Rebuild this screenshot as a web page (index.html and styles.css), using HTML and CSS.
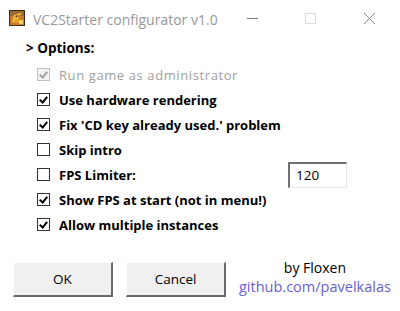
FILE: index.html
```html
<!DOCTYPE html>
<html>
<head>
<meta charset="utf-8">
<link rel="stylesheet" href="styles.css">
</head>
<body>
<div class="window">
  <div class="titlebar">
    <svg class="appicon" width="16" height="16" viewBox="0 0 16 16">
      <rect x="0.5" y="0.5" width="15" height="15" fill="#c87a2a" stroke="#3a2a1a"/>
      <rect x="1" y="1" width="14" height="5" fill="#9a6a3a"/>
      <path d="M3 12 L5 5 L8 4 L12 3 L13 4 L9 6 L10 9 L8 13 Z" fill="#f2c038"/>
      <path d="M4 13 L6 9 L9 9 L11 13 Z" fill="#e8a020"/>
      <path d="M6 6 L9 5 L8 8 Z" fill="#7a3a18"/>
      <rect x="10" y="10" width="4" height="4" fill="#f0d060"/>
    </svg>
    <span class="title">VC2Starter configurator v1.0</span>
    <div class="controls">
      <div class="ctl"><span class="min-line"></span></div>
      <div class="ctl"><span class="max-box"></span></div>
      <svg class="ctl" width="58" height="31" viewBox="0 0 58 31"><path d="M22 13 L33 24 M33 13 L22 24" stroke="#888" stroke-width="1"/></svg>
    </div>
  </div>
  <div class="content">
    <div class="heading">&gt; Options:</div>
    <ul class="options">
      <li class="opt disabled"><span class="box checked"></span><span class="label">Run game as administrator</span></li>
      <li class="opt"><span class="box checked"></span><span class="label">Use hardware rendering</span></li>
      <li class="opt"><span class="box checked"></span><span class="label">Fix 'CD key already used.' problem</span></li>
      <li class="opt"><span class="box"></span><span class="label">Skip intro</span></li>
      <li class="opt fps"><span class="box"></span><span class="label">FPS Limiter:</span><span class="input">120</span></li>
      <li class="opt"><span class="box checked"></span><span class="label">Show FPS at start (not in menu!)</span></li>
      <li class="opt"><span class="box checked"></span><span class="label">Allow multiple instances</span></li>
    </ul>
    <div class="footer">
      <button class="btn">OK</button>
      <button class="btn">Cancel</button>
      <div class="credits">
        <div class="by">by Floxen</div>
        <div class="link">github.com/pavelkalas</div>
      </div>
    </div>
  </div>
</div>
</body>
</html>
```

FILE: styles.css
```css
html, body {
  margin: 0;
  padding: 0;
  background: #fff;
}
.window {
  width: 400px;
  height: 311px;
  font-family: "Open Sans", "Noto Sans", sans-serif;
  color: #000;
  display: flex;
  flex-direction: column;
}
.titlebar {
  height: 31px;
  display: flex;
  align-items: center;
  padding-left: 9px;
}
.appicon {
  flex: none;
  margin-top: 5px;
}
.title {
  margin-left: 8px;
  font-size: 14px;
  color: #999;
  margin-top: 8px;
  flex: 1 1 auto;
  min-width: 0;
  white-space: nowrap;
  overflow: hidden;
}
.controls {
  flex: none;
  display: flex;
  align-self: flex-start;
}
.ctl {
  display: block;
  flex: none;
  width: 58px;
  height: 31px;
}
.min-line {
  display: block;
  margin: 18px 0 0 21px;
  width: 11px;
  height: 0;
  border-top: 1px solid #777;
}
.max-box {
  display: block;
  margin: 13px 0 0 21px;
  width: 9px;
  height: 9px;
  border: 1px solid #dcdcdc;
}
.content {
  padding-left: 26px;
  display: flex;
  flex-direction: column;
}
.heading {
  font-weight: 700;
  font-size: 13.5px;
  height: 20px;
  line-height: 20px;
  margin-top: 7px;
}
.options {
  list-style: none;
  margin: 4px 0 0 0;
  padding: 0 0 0 11px;
}
.opt {
  height: 25px;
  display: flex;
  align-items: center;
  font-weight: 700;
  font-size: 13px;
}
.opt.disabled {
  font-weight: 400;
  color: #a0a0a0;
  letter-spacing: 0.6px;
}
.box {
  width: 11px;
  height: 11px;
  border: 1px solid #333;
  background: #fff;
  position: relative;
  flex: none;
}
.opt.disabled .box {
  border-color: #c0c0c0;
  background: #f4f4f4;
}
.box.checked::after {
  content: "";
  position: absolute;
  left: 3px;
  top: 1px;
  width: 3px;
  height: 6px;
  border-right: 2px solid #000;
  border-bottom: 2px solid #000;
  transform: rotate(40deg);
}
.opt.disabled .box.checked::after {
  border-color: #a0a0a0;
}
.label {
  margin-left: 9px;
}
.input {
  margin-left: auto;
  margin-right: 53px;
  width: 50px;
  height: 23px;
  line-height: 23px;
  padding-left: 6px;
  border-top: 2px solid #707070;
  border-left: 2px solid #707070;
  border-right: 1px solid #e8e8e8;
  border-bottom: 1px solid #e8e8e8;
  font-weight: 400;
  font-size: 13.5px;
  letter-spacing: 0;
}
.footer {
  display: flex;
  align-items: flex-start;
  margin-top: 25px;
  margin-left: -13px;
}
.btn {
  width: 100px;
  height: 35px;
  font-family: "Open Sans", "Noto Sans", sans-serif;
  font-size: 13.5px;
  background: #f0f0f0;
  border-top: 1px solid #fff;
  border-left: 1px solid #fff;
  border-right: 2px solid #6a6a6a;
  border-bottom: 2px solid #6a6a6a;
  margin-right: 13px;
  padding: 0;
  color: #000;
}
.credits {
  text-align: center;
  font-size: 14.5px;
  line-height: 19px;
  margin-top: -4px;
}
.by {
  font-size: 14px;
}
.link {
  color: #6a5fd2;
}
```
